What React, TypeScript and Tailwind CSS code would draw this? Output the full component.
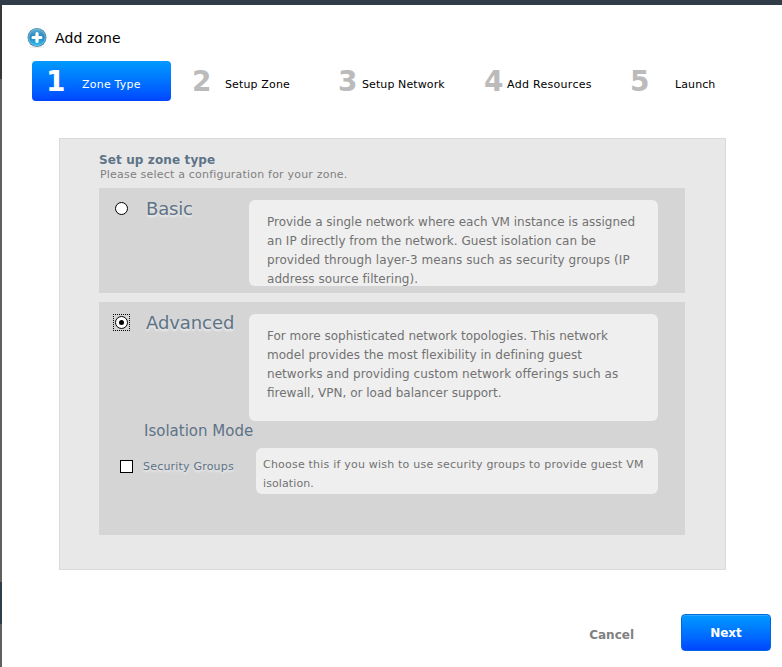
import React from 'react';

const steps = [
  { n: '1', label: 'Zone Type', box: 'w-[139px] pl-[14px]', gap: 'ml-[17px] tracking-[0.22px]', active: true },
  { n: '2', label: 'Setup Zone', box: 'w-[146px] pl-[20px]', gap: 'ml-[14px] tracking-[0.14px]', active: false },
  { n: '3', label: 'Setup Network', box: 'w-[146px] pl-[20px]', gap: 'ml-[5px] tracking-[0.1px]', active: false },
  { n: '4', label: 'Add Resources', box: 'w-[146px] pl-[20px]', gap: 'ml-[4px] tracking-[0.3px]', active: false },
  { n: '5', label: 'Launch', box: 'w-[146px] pl-[20px]', gap: 'ml-[26px] tracking-[0.1px]', active: false },
];

const basicLines = [
  { text: 'Provide a single network where each VM instance is assigned', spacing: 'tracking-[-0.01px]' },
  { text: 'an IP directly from the network. Guest isolation can be', spacing: 'tracking-[0.03px]' },
  { text: 'provided through layer-3 means such as security groups (IP', spacing: 'tracking-[0.08px]' },
  { text: 'address source filtering).', spacing: 'tracking-[0.06px]' },
];

const advancedLines = [
  { text: 'For more sophisticated network topologies. This network', spacing: 'tracking-normal' },
  { text: 'model provides the most flexibility in defining guest', spacing: 'tracking-[0.04px]' },
  { text: 'networks and providing custom network offerings such as', spacing: 'tracking-[0.06px]' },
  { text: 'firewall, VPN, or load balancer support.', spacing: 'tracking-normal' },
];

const groupLines = [
  { text: 'Choose this if you wish to use security groups to provide guest VM', spacing: 'tracking-[0.21px]' },
  { text: 'isolation.', spacing: 'tracking-[0.1px]' },
];

function Step({ n, label, box, gap, active }: (typeof steps)[number]) {
  return (
    <div
      className={`flex h-[40px] shrink-0 items-start whitespace-nowrap rounded-[4px] ${box} ${
        active ? 'bg-linear-to-b from-[#0099ff] to-[#0044ff] text-white' : 'text-black'
      }`}
    >
      <span className={`w-[19px] pt-[6px] text-[28px] leading-[30px] font-bold ${active ? 'text-white' : 'text-[#bbbbbb]'}`}>{n}</span>
      <span className={`pt-[16px] text-[11px] leading-[16px] ${gap}`}>{label}</span>
    </div>
  );
}

function Lines({ lines }: { lines: { text: string; spacing: string }[] }) {
  return (
    <>
      {lines.map(({ text, spacing }) => (
        <div key={text} className={`[font-variant-ligatures:normal] ${spacing}`}>
          {text}
        </div>
      ))}
    </>
  );
}

function AddIcon() {
  return (
    <svg width="22" height="22" viewBox="0 0 22 22" className="shrink-0">
      <defs>
        <linearGradient id="disc" x1="0" y1="0" x2="0" y2="1">
          <stop offset="0" stopColor="#5aa9d0" />
          <stop offset=".5" stopColor="#2385bd" />
          <stop offset="1" stopColor="#2cc0f6" />
        </linearGradient>
      </defs>
      <ellipse cx="11" cy="20" rx="8" ry="1.200" fill="#ededed" />
      <circle cx="11" cy="10.500" r="9.500" fill="#4489ad" />
      <circle cx="11" cy="10.500" r="8.200" fill="url(#disc)" stroke="#7cc6ea" strokeWidth=".8" />
      <path d="M11 6.500v8M7 10.500h8" stroke="#fff" strokeWidth="3.200" strokeLinecap="round" />
    </svg>
  );
}

const glow = '[text-shadow:0_2px_2px_#efefef]';

export default function App() {
  return (
    <div className="flex h-[667px] w-[782px] flex-col overflow-hidden bg-white font-['DejaVu_Sans',sans-serif]">
      <div className="h-[5px] shrink-0 bg-[#303d48]" />
      <div className="flex min-h-0 flex-1">
        <div className="flex w-[2px] shrink-0 flex-col bg-[#606060]">
          <div className="h-[74px] bg-[#35383b]" />
          <div className="h-[503px] bg-[#606060]" />
          <div className="h-[42px] bg-[#2f3d4a]" />
        </div>
        <div className="flex w-[780px] shrink-0 flex-col">
          <div className="flex h-[56px] items-start pt-[22px] pl-[24px]">
            <AddIcon />
            <h1 className="ml-[7px] pt-px text-[14px] leading-[20px] tracking-[0.1px] text-black">Add zone</h1>
          </div>
          <div className="flex pl-[30px]">
            {steps.map((s, i) => (
              <React.Fragment key={s.n}>
                {i === 1 && <div className="w-px shrink-0" />}
                <Step {...s} />
              </React.Fragment>
            ))}
          </div>

          <section className="mt-[37px] ml-[57px] h-[432px] w-[667px] shrink-0 border border-[#dadada] bg-[#e8e8e8] pl-[39px]">
            <h2 className="pt-[13px] text-[12px] leading-[16px] font-bold tracking-[0.12px] text-[#5d7387]">Set up zone type</h2>
            <p className="pl-px text-[11px] leading-[13px] tracking-[0.2px] text-[#808080]">Please select a configuration for your zone.</p>

            <div className="mt-[7px] flex h-[105px] w-[586px] items-start bg-[#d5d5d5] pt-[12px]">
              <div className="mt-[2px] ml-[16px] size-[13px] rounded-full border border-black bg-white" />
              <div className={`ml-[18px] w-[103px] text-[18px] leading-[18px] tracking-[-0.2px] text-[#5d7387] ${glow}`}>Basic</div>
              <div className="h-[86px] w-[409px] overflow-hidden rounded-[6px] bg-[#efefef] pt-[13px] pl-[18px] text-[12px] leading-[19px] whitespace-nowrap text-[#727272]">
                <Lines lines={basicLines} />
              </div>
            </div>

            <div className="mt-[9px] h-[233px] w-[586px] bg-[#d5d5d5] pt-[12px]">
              <div className="flex h-[107px] items-start">
                <div className="ml-[14px] flex size-[17px] items-center justify-center border border-dotted border-black">
                  <div className="flex size-[13px] shrink-0 items-center justify-center rounded-full border border-black bg-white">
                    <div className="size-[5px] rounded-full bg-black" />
                  </div>
                </div>
                <div className={`ml-[16px] w-[103px] text-[18px] leading-[18px] tracking-[-0.08px] text-[#5d7387] ${glow}`}>Advanced</div>
                <div className="h-[107px] w-[409px] rounded-[6px] bg-[#efefef] pt-[13px] pl-[18px] text-[12px] leading-[19px] whitespace-nowrap text-[#727272]">
                  <Lines lines={advancedLines} />
                </div>
              </div>
              <div className="h-[27px] pl-[45px] text-[15px] leading-[20px] text-[#5d7387]">Isolation Mode</div>
              <div className="flex items-start">
                <div className="mt-[12px] ml-[21px] size-[13px] border border-black bg-white" />
                <div className={`mt-[11px] ml-[10px] w-[113px] text-[11px] leading-[16px] tracking-[0.2px] text-[#5d7387] ${glow}`}>
                  Security Groups
                </div>
                <div className="h-[46px] w-[402px] rounded-[6px] bg-[#efefef] pt-[7px] pl-[7px] text-[11px] leading-[19px] whitespace-nowrap text-[#727272]">
                  <Lines lines={groupLines} />
                </div>
              </div>
            </div>
          </section>

          <div className="mt-[44px] flex items-start justify-end pr-[11px]">
            <button className="mt-[13px] mr-[47px] text-[12px] leading-[16px] font-bold text-[#808080]">Cancel</button>
            <button className="h-[37px] w-[90px] rounded-[4px] border border-[#0069e0] bg-linear-to-b from-[#0099ff] to-[#0044ff] text-[12px] leading-[16px] font-bold text-white shadow-[inset_0_1px_0_#2fa9ff]">
              Next
            </button>
          </div>
        </div>
      </div>
    </div>
  );
}
